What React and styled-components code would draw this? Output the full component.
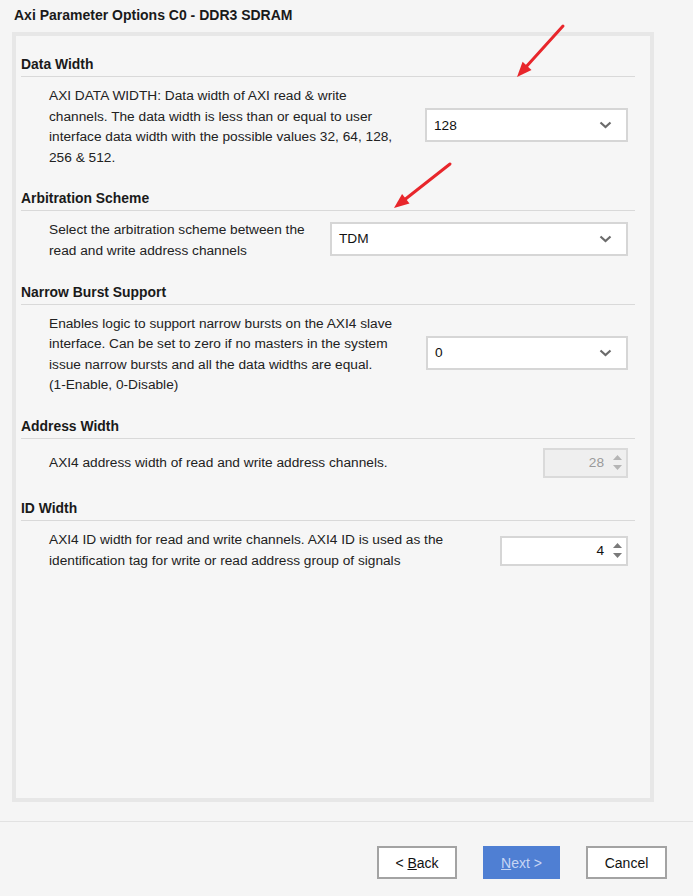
import styled, { createGlobalStyle } from 'styled-components'

const Global = createGlobalStyle`
   html, body {
      margin: 0;
      padding: 0;
      background: #f5f5f5;
   }
   body {
      font-family: "Liberation Sans", Arial, sans-serif;
      font-size: 13.7px;
      color: #1a1a1a;
   }
`

const Page = styled.div`
   position: relative;
   width: 693px;
   height: 896px;
   display: flex;
   flex-direction: column;
   background: #f5f5f5;
   overflow: hidden;
`

const Title = styled.div`
   height: 32px;
   padding-left: 14px;
   box-sizing: border-box;
   display: flex;
   align-items: center;
   padding-bottom: 3px;
   font-weight: bold;
   font-size: 14px;
`

const Panel = styled.div`
   margin: 0 39px 0 12px;
   height: 770px;
   box-sizing: border-box;
   border: 4px solid #e7e7e7;
   background: #f6f6f6;
   padding: 20px 15px 0 5px;
`

const Section = styled.div`
   margin-bottom: 22px;
`

const SectionHeader = styled.div`
   font-weight: bold;
   font-size: 13.9px;
   line-height: 16px;
   padding-bottom: 4px;
   border-bottom: 1px solid #d9d9d9;
`

const Row = styled.div`
   display: flex;
   align-items: center;
   justify-content: space-between;
   padding: 9px 7px 0 28px;
`

const Desc = styled.div`
   font-size: 13.7px;
   line-height: 20.6px;
   color: #222;
   white-space: nowrap;
`

const SelectBox = styled.div`
   width: ${(p) => p.w}px;
   height: 34px;
   margin-bottom: 4px;
   box-sizing: border-box;
   background: #fff;
   border: 2px solid #d6d6d6;
   display: flex;
   align-items: center;
   justify-content: space-between;
   padding: 0 14px 0 7px;
   font-size: 13.7px;
   color: #111;
`

const Spinner = styled.div`
   width: ${(p) => p.w}px;
   height: 30px;
   box-sizing: border-box;
   background: ${(p) => (p.disabled ? '#efefef' : '#fff')};
   border: 2px solid ${(p) => (p.disabled ? '#dadada' : '#d6d6d6')};
   display: flex;
   align-items: center;
   justify-content: flex-end;
   gap: 9px;
   padding-right: 4px;
   font-size: 13.7px;
   color: ${(p) => (p.disabled ? '#9a9a9a' : '#111')};
`

const Arrows = styled.div`
   display: flex;
   flex-direction: column;
   gap: 5px;
`

const Footer = styled.div`
   margin-top: 19px;
   border-top: 1px solid #e2e2e2;
   padding: 24px 26px 0 0;
   display: flex;
   justify-content: flex-end;
   gap: 26px;
`

const Button = styled.button`
   width: ${(p) => p.w}px;
   height: 33px;
   box-sizing: border-box;
   font-family: "Liberation Sans", Arial, sans-serif;
   font-size: 14px;
   padding: 0;
   border: ${(p) => (p.primary ? '1px solid #4f7fd3' : '2px solid #a3a3a3')};
   background: ${(p) => (p.primary ? '#4f7fd3' : '#fff')};
   color: ${(p) => (p.primary ? '#c7d6f3' : '#111')};
`

const Overlay = styled.svg`
   position: absolute;
   left: 0;
   top: 0;
   pointer-events: none;
`

const Chevron = () => (
   <svg width="13" height="8" viewBox="0 0 13 8">
      <path d="M1.5 1.5 L6.5 6 L11.5 1.5" fill="none" stroke="#6b6b6b" strokeWidth="2.2" />
   </svg>
)

const SpinArrows = ({ color }) => (
   <Arrows>
      <svg width="9" height="5" viewBox="0 0 9 5">
         <path d="M0 5 L4.5 0 L9 5 Z" fill={color} />
      </svg>
      <svg width="9" height="5" viewBox="0 0 9 5">
         <path d="M0 0 L4.5 5 L9 0 Z" fill={color} />
      </svg>
   </Arrows>
)

function RedArrow({ x1, y1, x2, y2 }) {
   const dx = x2 - x1
   const dy = y2 - y1
   const len = Math.hypot(dx, dy)
   const ux = dx / len
   const uy = dy / len
   const bx = x2 - ux * 15
   const by = y2 - uy * 15
   const px = -uy * 6
   const py = ux * 6
   return (
      <g>
         <line x1={x1} y1={y1} x2={bx + ux * 2} y2={by + uy * 2} stroke="#e8262b" strokeWidth="3" strokeLinecap="round" />
         <polygon points={`${x2},${y2} ${bx + px},${by + py} ${bx - px},${by - py}`} fill="#e8262b" />
      </g>
   )
}

export default function App() {
   return (
      <Page>
         <Global />
         <Title>Axi Parameter Options C0 - DDR3 SDRAM</Title>
         <Panel>
            <Section>
               <SectionHeader>Data Width</SectionHeader>
               <Row>
                  <Desc>
                     AXI DATA WIDTH: Data width of AXI read &amp; write
                     <br />
                     channels. The data width is less than or equal to user
                     <br />
                     interface data width with the possible values 32, 64, 128,
                     <br />
                     256 &amp; 512.
                  </Desc>
                  <SelectBox w={203}>
                     <span>128</span>
                     <Chevron />
                  </SelectBox>
               </Row>
            </Section>
            <Section>
               <SectionHeader>Arbitration Scheme</SectionHeader>
               <Row>
                  <Desc>
                     Select the arbitration scheme between the
                     <br />
                     read and write address channels
                  </Desc>
                  <SelectBox w={298}>
                     <span>TDM</span>
                     <Chevron />
                  </SelectBox>
               </Row>
            </Section>
            <Section>
               <SectionHeader>Narrow Burst Support</SectionHeader>
               <Row>
                  <Desc>
                     Enables logic to support narrow bursts on the AXI4 slave
                     <br />
                     interface. Can be set to zero if no masters in the system
                     <br />
                     issue narrow bursts and all the data widths are equal.
                     <br />
                     (1-Enable, 0-Disable)
                  </Desc>
                  <SelectBox w={202}>
                     <span>0</span>
                     <Chevron />
                  </SelectBox>
               </Row>
            </Section>
            <Section>
               <SectionHeader>Address Width</SectionHeader>
               <Row>
                  <Desc>AXI4 address width of read and write address channels.</Desc>
                  <Spinner w={85} disabled>
                     <span>28</span>
                     <SpinArrows color="#b5b5b5" />
                  </Spinner>
               </Row>
            </Section>
            <Section>
               <SectionHeader>ID Width</SectionHeader>
               <Row>
                  <Desc>
                     AXI4 ID width for read and write channels. AXI4 ID is used as the
                     <br />
                     identification tag for write or read address group of signals
                  </Desc>
                  <Spinner w={128}>
                     <span>4</span>
                     <SpinArrows color="#7a7a7a" />
                  </Spinner>
               </Row>
            </Section>
         </Panel>
         <Footer>
            <Button w={80}>
               &lt; <u>B</u>ack
            </Button>
            <Button w={77} primary>
               <u>N</u>ext &gt;
            </Button>
            <Button w={81}>Cancel</Button>
         </Footer>
         <Overlay width="693" height="896">
            <RedArrow x1={563} y1={26} x2={517} y2={77} />
            <RedArrow x1={450} y1={164} x2={394} y2={208} />
         </Overlay>
      </Page>
   )
}
